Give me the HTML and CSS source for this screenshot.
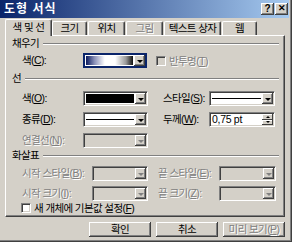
FILE: index.html
```html
<!DOCTYPE html>
<html lang="ko">
<head>
<meta charset="utf-8">
<link rel="stylesheet" href="styles.css">
</head>
<body>
<div class="win">
  <div class="title">
    <span class="title-text">도형 서식</span>
    <div class="caps"><span class="cap">?</span><span class="cap cap-x">✕</span></div>
  </div>
  <div class="tabs">
    <div class="tab sel w-sel">색 및 선</div>
    <div class="tab w-size">크기</div>
    <div class="tab w-pos">위치</div>
    <div class="tab w-pic dis">그림</div>
    <div class="tab w-text">텍스트 상자</div>
    <div class="tab w-web">웹</div>
  </div>
  <div class="panel">
    <div class="grp g1"><span>채우기</span><i class="rule"></i></div>
    <div class="row r-fill">
      <span class="lab l1">색(<u>C</u>):</span>
      <div class="combo c-fill"><div class="val grad"></div><div class="drop"><i class="tri"></i></div></div>
      <span class="chk chk-dis"></span><span class="dis-t">반투명(<u>T</u>)</span>
    </div>
    <div class="grp g2"><span>선</span><i class="rule"></i></div>
    <div class="row r1">
      <span class="lab l1">색(<u>O</u>):</span>
      <div class="combo c1"><div class="val"><i class="swatch"></i></div><div class="drop"><i class="tri"></i></div></div>
      <span class="lab l2">스타일(<u>S</u>):</span>
      <div class="combo c2"><div class="val"><i class="line"></i></div><div class="drop"><i class="tri"></i></div></div>
    </div>
    <div class="row r2">
      <span class="lab l1">종류(<u>D</u>):</span>
      <div class="combo c1"><div class="val"><i class="line"></i></div><div class="drop"><i class="tri"></i></div></div>
      <span class="lab l2">두께(<u>W</u>):</span>
      <div class="combo c2"><div class="val txt">0,75 pt</div><div class="spin"><span class="sb"><i class="tri up"></i></span><span class="sb"><i class="tri"></i></span></div></div>
    </div>
    <div class="row r3">
      <span class="lab l1 dis-t">연결선(<u>N</u>):</span>
      <div class="combo c1 off"><div class="val"></div><div class="drop"><i class="tri"></i></div></div>
    </div>
    <div class="grp g3"><span>화살표</span><i class="rule"></i></div>
    <div class="row r4">
      <span class="lab l3 dis-t">시작 스타일(<u>B</u>):</span>
      <div class="combo c3 off"><div class="val"></div><div class="drop"><i class="tri"></i></div></div>
      <span class="lab l4 dis-t">끝 스타일(<u>E</u>):</span>
      <div class="combo c4 off"><div class="val"></div><div class="drop"><i class="tri"></i></div></div>
    </div>
    <div class="row r5">
      <span class="lab l3 dis-t">시작 크기(<u>I</u>):</span>
      <div class="combo c3 off"><div class="val"></div><div class="drop"><i class="tri"></i></div></div>
      <span class="lab l4 dis-t">끝 크기(<u>Z</u>):</span>
      <div class="combo c4 off"><div class="val"></div><div class="drop"><i class="tri"></i></div></div>
    </div>
    <div class="row r6">
      <span class="chk chk-b"></span><span class="chk-t">새 개체에 기본값 설정(<u>F</u>)</span>
    </div>
  </div>
  <div class="btns">
    <div class="btn">확인</div>
    <div class="btn">취소</div>
    <div class="btn dis-t">미리 보기(<u>P</u>)</div>
  </div>
</div>
</body>
</html>
```
FILE: styles.css
```css
* { box-sizing: border-box; }
html, body { margin: 0; padding: 0; }
body {
  width: 292px; height: 242px; overflow: hidden;
  background: #d4d0c8;
  font-family: "Liberation Sans", "Noto Sans CJK KR", sans-serif;
  font-size: 10.5px; letter-spacing: -0.6px; color: #000;
}
u { text-decoration: underline; text-underline-offset: 1px; }
.win {
  width: 292px; height: 242px;
  border-right: 1px solid #404040; border-bottom: 1px solid #404040;
  box-shadow: inset -1px -1px 0 #808080;
}
.title {
  height: 18px; margin-right: 2px;
  background: linear-gradient(to right, #0a246a, #a6caf0);
  display: flex; align-items: center;
  padding-left: 4px; color: #fff; font-weight: bold; font-size: 12px; letter-spacing: 0;
}
.title-text { line-height: 18px; letter-spacing: 1px; }
.caps { margin-left: auto; display: flex; gap: 1px; padding-right: 1px; }
.cap {
  width: 13px; height: 12px; background: #d4d0c8;
  box-shadow: inset -1px -1px #404040, inset 1px 1px #fff, inset -2px -2px #808080;
  color: #000; font-size: 10px; font-weight: bold; line-height: 11px; text-align: center; letter-spacing: 0;
}
.cap-x { font-size: 9px; }
.tabs {
  height: 17px; display: flex; align-items: flex-end;
  padding-left: 5px; position: relative; z-index: 2;
}
.tab {
  height: 14px; background: #d4d0c8;
  border-top: 1px solid #fff; border-left: 1px solid #fff;
  border-right: 1px solid #404040;
  border-radius: 2px 2px 0 0;
  box-shadow: inset -1px 0 #808080;
  text-align: center; line-height: 13px;
  margin-left: 1px;
}
.tab.sel { height: 17px; margin-bottom: -1px; margin-left: 0; margin-right: -2px; line-height: 15px; }
.w-sel { width: 47px; }
.w-size { width: 35px; margin-left: 2px; }
.w-pos { width: 37px; }
.w-pic { width: 37px; }
.w-text { width: 57px; }
.w-web { width: 35px; }
.tab.dis { color: #808080; text-shadow: 1px 1px #fff; }
.panel {
  margin-left: 5px; width: 280px; height: 182px;
  border-top: 1px solid #fff; border-left: 1px solid #fff;
  border-right: 1px solid #404040; border-bottom: 1px solid #404040;
  box-shadow: inset -1px -1px #808080;
  display: flex; flex-direction: column;
}
.grp {
  height: 15px; display: flex; align-items: center;
  padding-left: 6px; padding-right: 5px; line-height: 15px;
}
.grp .rule { flex: 1; height: 2px; border-top: 1px solid #808080; border-bottom: 1px solid #fff; margin-left: 4px; }
.g1 { margin-top: 0; }
.g2 { margin-top: 3px; }
.g3 { margin-top: 0; }
.row { height: 15px; display: flex; align-items: center; padding-left: 16px; }
.r-fill { margin-top: 2px; }
.r1 { margin-top: 5px; }
.r2 { margin-top: 6px; }
.r3 { margin-top: 6px; }
.r4 { margin-top: 3px; }
.r5 { margin-top: 5px; }
.r6 { margin-top: 0; height: 14px; padding-left: 15px; }
.lab { white-space: nowrap; line-height: 15px; }
.l1 { width: 61px; }
.l2 { width: 46px; margin-left: 15px; }
.l3 { width: 70px; }
.l4 { width: 61px; margin-left: 10px; }
.dis-t { color: #808080; text-shadow: 1px 1px #fff; }
.combo {
  height: 15px; background: #fff;
  border: 1px solid; border-color: #808080 #fff #fff #808080;
  box-shadow: inset 1px 1px #404040, inset -1px -1px #d4d0c8;
  padding: 1px; display: flex;
}
.combo.off { background: #d4d0c8; }
.c-fill { width: 64px; border-color: #0a246a; box-shadow: inset 1px 1px #0a246a, inset -1px -1px #0a246a; }
.c1 { width: 65px; }
.c2 { width: 66px; }
.c3 { width: 56px; }
.c4 { width: 57px; }
.val { flex: 1; display: flex; align-items: center; }
.val.grad { background: linear-gradient(to right, #0a1a5e 0%, #8a90b8 18%, #fff 40%, #fff 62%, #9a9a9a 85%, #101010 100%); margin: 1px; }
.swatch { display: block; flex: 1; height: 9px; background: #000; margin: 0 1px; }
.line { display: block; flex: 1; height: 1px; background: #000; margin: 0 1px; }
.val.txt { padding-left: 1px; line-height: 11px; letter-spacing: -0.3px; }
.drop {
  width: 11px; background: #d4d0c8;
  box-shadow: inset -1px -1px #404040, inset 1px 1px #fff, inset -2px -2px #808080;
  display: flex; align-items: center; justify-content: center;
}
.tri { display: block; width: 0; height: 0; border-left: 3px solid transparent; border-right: 3px solid transparent; border-top: 3px solid #000; margin-top: 1px; }
.tri.up { border-top: 0; border-bottom: 3px solid #000; margin-top: 0; }
.off .tri { border-top-color: #808080; }
.spin { width: 11px; display: flex; flex-direction: column; }
.sb {
  flex: 1; background: #d4d0c8;
  box-shadow: inset -1px -1px #404040, inset 1px 1px #fff;
  display: flex; align-items: center; justify-content: center;
}
.sb .tri { border-left-width: 2px; border-right-width: 2px; border-top-width: 2px; margin: 0; }
.sb .tri.up { border-bottom-width: 2px; }
.chk {
  width: 10px; height: 10px; background: #fff;
  border: 1px solid; border-color: #808080 #fff #fff #808080;
  box-shadow: inset 1px 1px #404040, inset -1px -1px #d4d0c8;
  flex: none;
}
.chk-dis { background: #d4d0c8; margin-left: 9px; margin-right: 3px; }
.chk-t { margin-left: 3px; line-height: 14px; }
.btns { display: flex; gap: 5px; padding-left: 89px; margin-top: 5px; }
.btn {
  width: 62px; height: 15px; background: #d4d0c8;
  box-shadow: inset -1px -1px #404040, inset 1px 1px #fff, inset -2px -2px #808080;
  text-align: center; line-height: 15px;
}
```
